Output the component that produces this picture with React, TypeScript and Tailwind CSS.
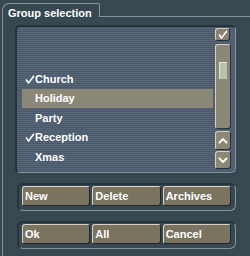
import React from "react";

const font = { fontFamily: '"Liberation Sans", Arial, sans-serif' };

function Check({ className = "" }: { className?: string }) {
  return (
    <svg width="10" height="9" viewBox="0 0 10 9" className={className}>
      <path d="M1 4.5 L3.5 8 L9 0.8" fill="none" stroke="#ffffff" strokeWidth="1.6" strokeLinejoin="round" />
    </svg>
  );
}

function Chevron({ up }: { up: boolean }) {
  return (
    <svg width="10" height="7" viewBox="0 0 10 7">
      <path
        d={up ? "M1.5 5.5 L5 2 L8.5 5.5" : "M1.5 1.5 L5 5 L8.5 1.5"}
        fill="none"
        stroke="#ffffff"
        strokeWidth="1.8"
        strokeLinecap="round"
        strokeLinejoin="round"
      />
    </svg>
  );
}

const rows: { label: string; checked: boolean; selected: boolean; tall: boolean }[] = [
  { label: "Church", checked: true, selected: false, tall: true },
  { label: "Holiday", checked: false, selected: true, tall: false },
  { label: "Party", checked: false, selected: false, tall: true },
  { label: "Reception", checked: true, selected: false, tall: false },
  { label: "Xmas", checked: false, selected: false, tall: true },
];

function Btn({ label }: { label: string }) {
  return (
    <div className="h-[20px] flex items-center pl-[2px] bg-[#79735f] border-t border-l border-t-[#d4d3c8] border-l-[#d4d3c8] border-b border-r border-b-[#1f272d] border-r-[#1f272d] rounded-[3px] text-white text-[11px] font-bold leading-none">
      {label}
    </div>
  );
}

function ButtonGroup({ labels }: { labels: string[] }) {
  return (
    <div className="ml-[2px] w-[219px] rounded-[6px] border-t-2 border-l-2 border-t-[#27343b] border-l-[#27343b] border-b border-r border-b-[#8595a2] border-r-[#8595a2] pl-[3px] pr-[4px] pt-[1px] pb-[4px]">
      <div className="grid grid-cols-3 gap-[2px]">
        {labels.map((l) => (
          <Btn key={l} label={l} />
        ))}
      </div>
    </div>
  );
}

export default function App() {
  return (
    <div
      className="w-[250px] h-[256px] bg-[#384850] pt-[3px] pl-[2px] flex flex-col overflow-hidden"
      style={font}
    >
      {/* header with tab */}
      <div className="flex h-[14px] shrink-0">
        <div className="w-[98px] border-t border-l border-r border-[#8595a2] rounded-tl-[7px] rounded-tr-[2px]">
          <div className="pl-[5px] pt-[4px] text-[11px] leading-[11px] font-bold text-white whitespace-nowrap">
            Group selection
          </div>
        </div>
        <div className="flex-1 border-b border-[#8595a2]" />
      </div>

      {/* panel body */}
      <div className="flex-1 border-l border-[#8595a2] pl-[12px] pr-[14px] pt-[8px] flex flex-col">
        {/* list frame */}
        <div className="h-[148px] rounded-[5px] border-t-2 border-l-2 border-t-[#25323a] border-l-[#25323a] border-b border-r border-b-[#8595a2] border-r-[#8595a2] bg-[image:repeating-linear-gradient(to_bottom,#4a5a6a_0px,#4a5a6a_1px,#566678_1px,#566678_2px)] flex pl-[5px] pr-[4px]">
          <div className="w-[191px] pt-[42px] flex flex-col">
            {rows.map((r) => (
              <div
                key={r.label}
                className={`${r.tall ? "h-[20px]" : "h-[19px]"} ${r.selected ? "bg-[#8b8878]" : ""} flex items-center text-white text-[11px] font-bold leading-none`}
              >
                <div className="w-[13px] pl-[3px] flex items-center">{r.checked ? <Check /> : null}</div>
                <span>{r.label}</span>
              </div>
            ))}
          </div>
          <div className="ml-[2px] w-[16px] flex flex-col pt-[1px]">
            <div className="h-[13px] w-[15px] bg-[#8a7e6e] rounded-[3px] border-t border-l border-t-[#d4d0c4] border-l-[#d4d0c4] border-b border-r border-b-[#2a3036] border-r-[#2a3036] flex items-center justify-center">
              <Check />
            </div>
            <div className="mt-[3px] h-[85px] bg-[#8b8876] rounded-[3px] border-t border-l border-t-[#d4d0c4] border-l-[#d4d0c4] border-b border-r border-b-[#2a3036] border-r-[#2a3036] pt-[17px]">
              <div className="ml-[3px] w-[8px] h-[17px] bg-[#b9c2ac] border-t border-l border-[#dfe4d6]" />
            </div>
            <div className="mt-[2px] h-[19px] bg-[#8b8876] rounded-[3px] border-t border-l border-t-[#d4d0c4] border-l-[#d4d0c4] border-b border-r border-b-[#2a3036] border-r-[#2a3036] flex items-center justify-center">
              <Chevron up />
            </div>
            <div className="mt-[1px] h-[18px] bg-[#8b8876] rounded-[3px] border-t border-l border-t-[#d4d0c4] border-l-[#d4d0c4] border-b border-r border-b-[#2a3036] border-r-[#2a3036] flex items-center justify-center">
              <Chevron up={false} />
            </div>
          </div>
        </div>

        <div className="mt-[10px]">
          <ButtonGroup labels={["New", "Delete", "Archives"]} />
        </div>
        <div className="mt-[10px]">
          <ButtonGroup labels={["Ok", "All", "Cancel"]} />
        </div>
      </div>
    </div>
  );
}
